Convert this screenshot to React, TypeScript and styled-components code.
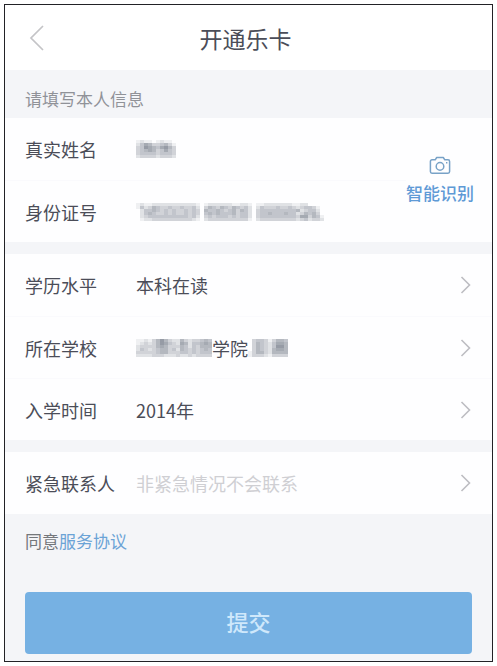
import React from 'react';
import styled, { createGlobalStyle } from 'styled-components';

const GlobalStyle = createGlobalStyle`
  * { box-sizing: border-box; }
  body {
    margin: 0;
    background: #fff;
    color: #4b4d58;
    font-family: "Noto Sans CJK SC", sans-serif;
    font-size: 18px;
    line-height: 26px;
  }
  button, input { font: inherit; color: inherit; }
`;

const Screen = styled.main`
  margin: 4px;
  border: 1px solid #222226;
  background: #f4f5f8;
`;

const Header = styled.header`
  display: grid;
  grid-template-columns: 40px 1fr 46px;
  align-items: center;
  height: 65px;
  padding: 0 12px;
  background: #fff;
`;

const IconButton = styled.button`
  display: flex;
  align-items: center;
  justify-content: center;
  height: 40px;
  padding: 0;
  border: 0;
  background: none;
`;

const Title = styled.h1`
  margin: 0;
  font-size: 23px;
  line-height: 32px;
  font-weight: 400;
  text-align: center;
`;

const Notice = styled.p`
  margin: 0;
  padding: 16px 20px 6px;
  color: #909298;
  font-size: 17px;
`;

const Groups = styled.div`
  display: flex;
  flex-direction: column;
  gap: 12px;
`;

const Group = styled.section`
  display: flex;
  background: #fefeff;
`;

const Rows = styled.div`
  flex: 1;
  min-width: 0;
`;

const Row = styled.div`
  display: grid;
  grid-template-columns: 111px 1fr;
  align-items: center;
  width: 100%;
  height: 62px;
  padding: 0 20px;

  & + & { border-top: 1px solid #fafafd; }
`;

const RowButton = styled(Row).attrs({ as: 'button', type: 'button' })`
  grid-template-columns: 111px 1fr 12px;
  border: 0;
  background: none;
  text-align: left;
`;

const Value = styled.span<{ $empty?: boolean }>`
  display: flex;
  align-items: center;
  color: ${({ $empty }) => ($empty ? '#cfcfd3' : 'inherit')};
`;

const ScanButton = styled.button`
  display: flex;
  flex-direction: column;
  align-items: center;
  justify-content: center;
  gap: 4px;
  padding: 2px 18px 0 0;
  border: 0;
  background: none;
  color: #5f9ad6;
  font-size: 17px;
  line-height: 26px;
  font-weight: 500;
`;

const Footer = styled.footer`
  padding: 14px 20px 7px;
`;

const Agreement = styled.p`
  margin: 0 0 38px;
  color: #74777b;
  font-size: 17px;
`;

const Link = styled.a`
  color: #6ba3d6;
  text-decoration: none;
`;

const Submit = styled.button`
  display: block;
  width: 100%;
  height: 62px;
  padding: 0 0 4px;
  border: 0;
  border-radius: 4px;
  background: #76b1e3;
  color: #cfe8fb;
  font-size: 22px;
  font-weight: 500;
`;

const Drawing = styled.svg`
  display: block;
  flex: none;
`;

// Each digit is the darkness of one block, 0 being blank.
function Mosaic({ rows, cell, height }: { rows: string[]; cell: number; height: number }) {
  const width = rows[0].length * cell;
  return (
    <Drawing width={width} height={rows.length * height} shapeRendering="crispEdges" aria-hidden="true">
      {rows.flatMap((row, y) =>
        [...row].map((level, x) => (
          <rect
            key={`${x}-${y}`}
            x={x * cell}
            y={y * height}
            width={cell}
            height={height}
            fill="#69717f"
            fillOpacity={Number(level) * 0.1}
          />
        )),
      )}
    </Drawing>
  );
}

const NAME = ['1211012110', '2465334531', '3476546753', '3456534643', '3444434443', '2333323332'];

const ID_NUMBER = [
  '12112222222222210122222211221011222222211220000',
  '14235433433433420354354354342024333433432344310',
  '02445434343343430544543453542034444444445234420',
  '02454334343343430454544453442034454445442354530',
  '02344444444443420343444343442034444444443663541',
  '01223333333333210233333333331023333333332342332',
];

const SCHOOL_START = ['1121357532253233454', '1232357643265244565', '2333356533354243555', '2432345534254343454', '3333345533344343444', '2222333222322323333'];
const SCHOOL_END = ['0344313554', '0354324665', '0354324775', '0354325665', '1355325555', '1333213333'];

function Arrow() {
  return (
    <Drawing width="12" height="20" viewBox="0 0 12 20" fill="none" stroke="#bdbdc2" strokeWidth="1.6" aria-hidden="true">
      <path d="M1.5 2 9.5 10 1.5 18" />
    </Drawing>
  );
}

function Camera() {
  return (
    <Drawing width="22" height="20" viewBox="0 0 22 20" fill="none" stroke="#78a2c7" strokeWidth="1.5" strokeLinejoin="round" aria-hidden="true">
      <path d="M3 3.8h3.2l1.5-2.3h6.6l1.5 2.3H19a1.6 1.6 0 0 1 1.6 1.6v10.2a1.6 1.6 0 0 1-1.6 1.6H3a1.6 1.6 0 0 1-1.6-1.6V5.4A1.6 1.6 0 0 1 3 3.8Z" />
      <circle cx="11" cy="10.4" r="3.8" />
      <path d="M17 6.8h1.4" />
    </Drawing>
  );
}

export default function App() {
  return (
    <>
      <GlobalStyle />
      <Screen>
        <Header>
          <IconButton type="button" aria-label="返回">
            <Drawing width="16" height="28" viewBox="0 0 16 28" fill="none" stroke="#c4c4c7" strokeWidth="1.7" aria-hidden="true">
              <path d="M14 2 2 14 14 26" />
            </Drawing>
          </IconButton>
          <Title>开通乐卡</Title>
        </Header>
        <Notice>请填写本人信息</Notice>
        <Groups>
          <Group>
            <Rows>
              <Row>
                <span>真实姓名</span>
                <Value><Mosaic rows={NAME} cell={4} height={3} /></Value>
              </Row>
              <Row>
                <span>身份证号</span>
                <Value><Mosaic rows={ID_NUMBER} cell={4} height={3} /></Value>
              </Row>
            </Rows>
            <ScanButton type="button">
              <Camera />
              智能识别
            </ScanButton>
          </Group>
          <Group>
            <Rows>
              <RowButton>
                <span>学历水平</span>
                <Value>本科在读</Value>
                <Arrow />
              </RowButton>
              <RowButton>
                <span>所在学校</span>
                <Value>
                  <Mosaic rows={SCHOOL_START} cell={4} height={3} />
                  学院
                  <Mosaic rows={SCHOOL_END} cell={4} height={3} />
                </Value>
                <Arrow />
              </RowButton>
              <RowButton>
                <span>入学时间</span>
                <Value>2014年</Value>
                <Arrow />
              </RowButton>
            </Rows>
          </Group>
          <Group>
            <RowButton>
              <span>紧急联系人</span>
              <Value $empty>非紧急情况不会联系</Value>
              <Arrow />
            </RowButton>
          </Group>
        </Groups>
        <Footer>
          <Agreement>
            同意<Link href="#agreement">服务协议</Link>
          </Agreement>
          <Submit type="submit">提交</Submit>
        </Footer>
      </Screen>
    </>
  );
}
